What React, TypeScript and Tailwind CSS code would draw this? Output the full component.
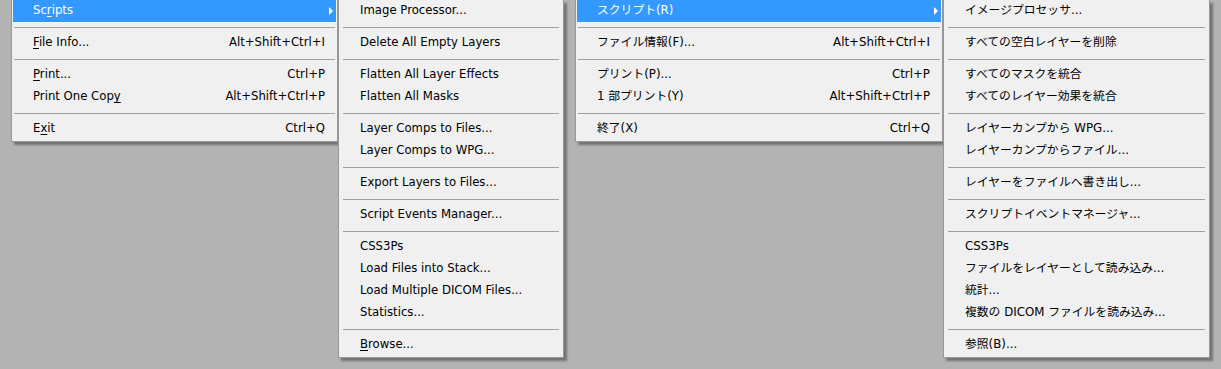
import { Fragment } from "react";

type Entry = { label?: string; shortcut?: string; sub?: boolean; active?: boolean; sep?: boolean };

const SEP: Entry = { sep: true };

const enMain: Entry[] = [
  { label: "Sc&ripts", sub: true, active: true },
  SEP,
  { label: "&File Info...", shortcut: "Alt+Shift+Ctrl+I" },
  SEP,
  { label: "&Print...", shortcut: "Ctrl+P" },
  { label: "Print One Cop&y", shortcut: "Alt+Shift+Ctrl+P" },
  SEP,
  { label: "E&xit", shortcut: "Ctrl+Q" },
];

const enSub: Entry[] = [
  { label: "Image Processor..." },
  SEP,
  { label: "Delete All Empty Layers" },
  SEP,
  { label: "Flatten All Layer Effects" },
  { label: "Flatten All Masks" },
  SEP,
  { label: "Layer Comps to Files..." },
  { label: "Layer Comps to WPG..." },
  SEP,
  { label: "Export Layers to Files..." },
  SEP,
  { label: "Script Events Manager..." },
  SEP,
  { label: "CSS3Ps" },
  { label: "Load Files into Stack..." },
  { label: "Load Multiple DICOM Files..." },
  { label: "Statistics..." },
  SEP,
  { label: "&Browse..." },
];

const jaMain: Entry[] = [
  { label: "スクリプト(R)", sub: true, active: true },
  SEP,
  { label: "ファイル情報(F)...", shortcut: "Alt+Shift+Ctrl+I" },
  SEP,
  { label: "プリント(P)...", shortcut: "Ctrl+P" },
  { label: "1 部プリント(Y)", shortcut: "Alt+Shift+Ctrl+P" },
  SEP,
  { label: "終了(X)", shortcut: "Ctrl+Q" },
];

const jaSub: Entry[] = [
  { label: "イメージプロセッサ..." },
  SEP,
  { label: "すべての空白レイヤーを削除" },
  SEP,
  { label: "すべてのマスクを統合" },
  { label: "すべてのレイヤー効果を統合" },
  SEP,
  { label: "レイヤーカンプから WPG..." },
  { label: "レイヤーカンプからファイル..." },
  SEP,
  { label: "レイヤーをファイルへ書き出し..." },
  SEP,
  { label: "スクリプトイベントマネージャ..." },
  SEP,
  { label: "CSS3Ps" },
  { label: "ファイルをレイヤーとして読み込み..." },
  { label: "統計..." },
  { label: "複数の DICOM ファイルを読み込み..." },
  SEP,
  { label: "参照(B)..." },
];

// "&" marks the mnemonic letter, drawn underlined
const Label = ({ text }: { text: string }) => {
  const i = text.indexOf("&");
  if (i < 0) return <>{text}</>;
  return (
    <>
      {text.slice(0, i)}
      <span className="underline underline-offset-2">{text[i + 1]}</span>
      {text.slice(i + 2)}
    </>
  );
};

const Menu = ({ items, width, inset }: { items: Entry[]; width: string; inset: string }) => (
  <div
    className={`${width} shrink-0 bg-[#f0f0f0] border-x border-b border-[#979797] px-px pb-px shadow-[3px_3px_2px_rgba(0,0,0,0.35)]`}
  >
    {items.map((it, i) =>
      it.sep ? (
        <div key={i} className={`h-[10px] flex items-center ${inset}`}>
          <div className="w-full h-px bg-[#a0a0a0]" />
        </div>
      ) : (
        <div
          key={i}
          className={`h-[22px] flex items-center justify-between pl-[20px] pr-[11px] whitespace-nowrap ${
            it.active ? "bg-[#3399ff] text-white" : "text-black"
          }`}
        >
          <span>
            <Label text={it.label!} />
          </span>
          {it.shortcut && <span>{it.shortcut}</span>}
          {it.sub && (
            <svg width="4" height="8" viewBox="0 0 4 8" className="mr-[-8px]">
              <path d="M0 0 L4 4 L0 8 Z" fill="white" />
            </svg>
          )}
        </div>
      )
    )}
  </div>
);

export default function App() {
  return (
    <div className="w-[1221px] h-[369px] bg-[#b3b3b3] flex items-start overflow-hidden">
      <div className="flex items-start pl-[11px] text-[11.7px] font-['DejaVu_Sans',sans-serif]">
        <Menu items={enMain} width="w-[327px]" inset="mx-px" />
        <div className="relative z-10">
          <Menu items={enSub} width="w-[226px]" inset="mx-[3px]" />
        </div>
      </div>
      <div className="flex items-start ml-[11px] text-[11.8px] font-['DejaVu_Sans','Noto_Sans_CJK_JP',sans-serif]">
        <Menu items={jaMain} width="w-[368px]" inset="mx-px" />
        <div className="relative z-10">
          <Menu items={jaSub} width="w-[267px]" inset="mx-[3px]" />
        </div>
      </div>
    </div>
  );
}
